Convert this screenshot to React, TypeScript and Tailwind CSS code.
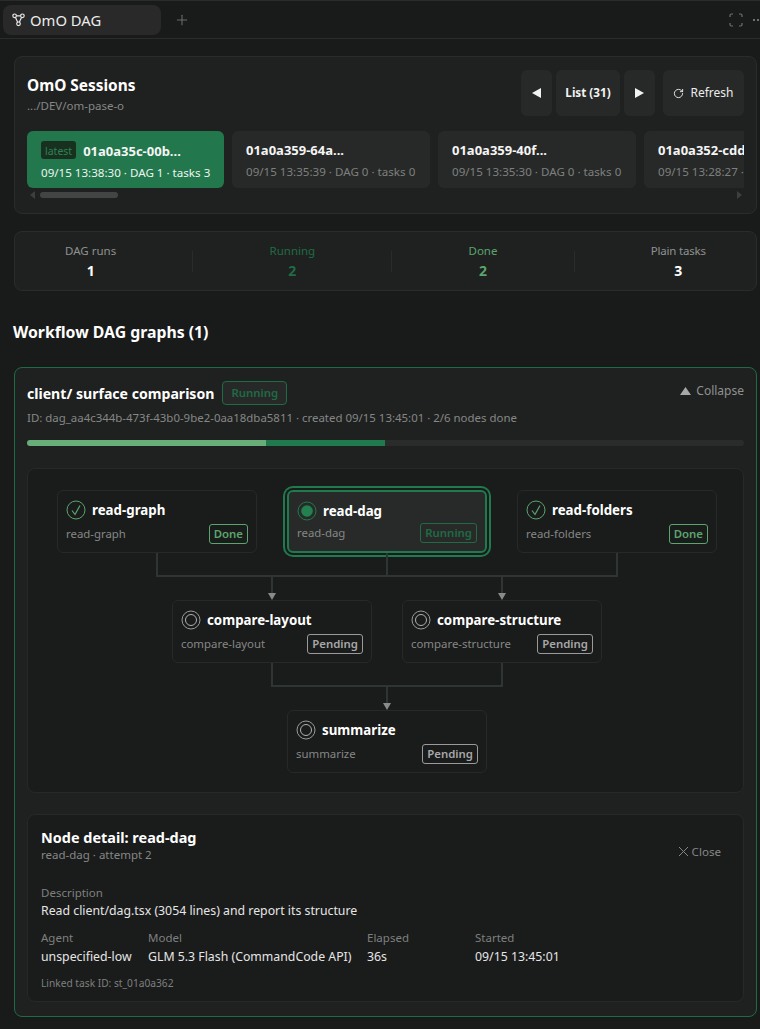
import { Fragment } from "react";
import { Plus, RotateCw } from "lucide-react";

type NodeStatus = "done" | "running" | "pending";

const font = "font-['Noto_Sans',sans-serif]";

const sessions = [
  { id: "01a0a35c-00b...", meta: "09/15 13:38:30 · DAG 1 · tasks 3", latest: true, width: "w-[197px]" },
  { id: "01a0a359-64a...", meta: "09/15 13:35:39 · DAG 0 · tasks 0", width: "w-[198px]" },
  { id: "01a0a359-40f...", meta: "09/15 13:35:30 · DAG 0 · tasks 0", width: "w-[198px]" },
  { id: "01a0a352-cdd...", meta: "09/15 13:28:27 · DAG 0 · tasks 0", width: "w-[198px]" },
];

const stats = [
  { label: "DAG runs", value: "1", labelColor: "text-[#8f9190]", valueColor: "text-white" },
  { label: "Running", value: "2", labelColor: "text-[#1f6b45]", valueColor: "text-[#1f6b45]" },
  { label: "Done", value: "2", labelColor: "text-[#5aa56d]", valueColor: "text-[#5aa56d]" },
  { label: "Plain tasks", value: "3", labelColor: "text-[#8f9190] tracking-[-0.2px]", valueColor: "text-white" },
];

function StatusIcon({ status }: { status: NodeStatus }) {
  if (status === "done") {
    return (
      <svg width="20" height="20" viewBox="0 0 20 20" fill="none" className="shrink-0">
        <circle cx="10" cy="10" r="9" stroke="#5aa56d" strokeWidth="1" />
        <path d="M6 10.5 L9 14.5 L14 5.5" stroke="#5aa56d" strokeWidth="1.2" />
      </svg>
    );
  }
  if (status === "running") {
    return (
      <svg width="20" height="20" viewBox="0 0 20 20" fill="none" className="shrink-0">
        <circle cx="10" cy="10" r="9" stroke="#1f7a4d" strokeWidth="1" />
        <circle cx="10" cy="10" r="5.8" fill="#23804f" />
      </svg>
    );
  }
  return (
    <svg width="20" height="20" viewBox="0 0 20 20" fill="none" className="shrink-0">
      <circle cx="10" cy="10" r="9" stroke="#9a9a9a" strokeWidth="1" />
      <circle cx="10" cy="10" r="5.5" stroke="#b0b0b0" strokeWidth="1" />
    </svg>
  );
}

function Badge({ status }: { status: NodeStatus }) {
  const styles = {
    done: "border-[#5aa56d] text-[#5aa56d]",
    running: "border-[#1f6b45] text-[#1f6b45]",
    pending: "border-[#9a9a9a] text-[#a8a8a8]",
  };
  const labels = { done: "Done", running: "Running", pending: "Pending" };
  return (
    <span className={`h-5 px-1 flex items-center rounded-[3px] border text-[11.4px] font-semibold ${styles[status]}`}>
      {labels[status]}
    </span>
  );
}

function DagNode({ name, status }: { name: string; status: NodeStatus }) {
  const running = status === "running";
  return (
    <div
      className={`w-[200px] h-[63px] rounded-md px-2 flex flex-col ${
        running
          ? "border-2 border-[#1f7a4d] bg-[#282a29] pt-[9px] shadow-[0_0_0_2px_#1a1b1b,0_0_0_4px_#1f7a4d]"
          : "border border-[#272928] bg-[#1a1b1b] pt-[9px]"
      }`}
    >
      <div className="flex items-center gap-[6px] h-5">
        <StatusIcon status={status} />
        <span className="text-[13.3px] font-bold text-white leading-5">{name}</span>
      </div>
      <div className={`flex items-center justify-between ${running ? "mt-[2px]" : "mt-1"}`}>
        <span className="text-[11.4px] text-[#858786]">{name}</span>
        <Badge status={status} />
      </div>
    </div>
  );
}

function Arrow({ x, y }: { x: number; y: number }) {
  return <polygon points={`${x - 4},${y} ${x + 4},${y} ${x},${y + 7}`} fill="#8a8a8a" />;
}

function Triangle({ dir }: { dir: "left" | "right" }) {
  return (
    <svg width="9" height="10" viewBox="0 0 9 10">
      <polygon points={dir === "left" ? "9,0 9,10 0,5" : "0,0 0,10 9,5"} fill="#f2f2f2" />
    </svg>
  );
}

function Field({ label, value }: { label: string; value: string }) {
  return (
    <div>
      <div className="text-[11.5px] text-[#7e807f] leading-[18px]">{label}</div>
      <div className="text-[12.3px] text-[#e6e6e6] leading-[19px] whitespace-nowrap">{value}</div>
    </div>
  );
}

export default function App() {
  return (
    <div className={`${font} w-[760px] h-[1029px] overflow-hidden bg-[#191a1a] text-white`}>
      {/* tab bar */}
      <div className="h-[39px] border-y border-[#2a2c2b] flex items-center pl-[3px]">
        <div className="w-[158px] h-[30px] rounded-lg bg-[#282928] flex items-center pl-[9px] gap-[5px]">
          <svg width="13" height="14" viewBox="0 0 13 14" fill="none" stroke="#e8e8e8" strokeWidth="1.2">
            <circle cx="2.6" cy="2.8" r="1.8" />
            <circle cx="10.4" cy="2.8" r="1.8" />
            <circle cx="6.5" cy="10.8" r="1.8" />
            <path d="M3.5 4.5 L5.7 9.2 M9.5 4.5 L7.3 9.2 M4.4 2.8 H8.6" />
          </svg>
          <span className="text-[14.8px] text-[#ececec] pt-px">OmO DAG</span>
        </div>
        <Plus size={16} strokeWidth={1.6} className="ml-[13px] text-[#6b6d6c]" />
        <svg width="14" height="14" viewBox="0 0 14 14" fill="none" stroke="#6f7170" strokeWidth="1.2" className="ml-auto">
          <path d="M1 4 V2.5 Q1 1 2.5 1 H4 M10 1 H11.5 Q13 1 13 2.5 V4 M13 10 V11.5 Q13 13 11.5 13 H10 M4 13 H2.5 Q1 13 1 11.5 V10" />
        </svg>
        <div className="flex gap-[2px] ml-[10px] w-[7px] overflow-hidden shrink-0">
          <span className="w-[2px] h-[2px] bg-[#6f7170] shrink-0" />
          <span className="w-[2px] h-[2px] bg-[#6f7170] shrink-0" />
          <span className="w-[2px] h-[2px] bg-[#6f7170] shrink-0" />
        </div>
      </div>

      <div className="pl-[14px] pr-[3px] pt-[17px]">
        {/* sessions */}
        <div className="h-[158px] rounded-lg border border-[#2a2c2b] bg-[#1f2120] px-3 pt-[13px]">
          <div className="flex items-start justify-between h-[46px]">
            <div className="pt-[4px]">
              <div className="text-[15.4px] font-bold leading-6">OmO Sessions</div>
              <div className="text-[11.5px] text-[#858786] leading-4">.../DEV/om-pase-o</div>
            </div>
            <div className="flex">
              <button className="w-[31px] h-[46px] rounded-md bg-[#272928] flex items-center justify-center">
                <Triangle dir="left" />
              </button>
              <button className="w-[64px] h-[46px] ml-1 rounded-md bg-[#272928] text-[11.7px] font-bold text-[#f2f2f2]">List (31)</button>
              <button className="w-[31px] h-[46px] ml-1 rounded-md bg-[#272928] flex items-center justify-center">
                <Triangle dir="right" />
              </button>
              <button className="w-[81px] h-[46px] ml-2 rounded-md bg-[#272928] flex items-center justify-center gap-[6px] text-xs text-[#ececec]">
                <RotateCw size={11} />
                Refresh
              </button>
            </div>
          </div>
          <div className="flex gap-2 mt-[15px] overflow-hidden">
            {sessions.map((s) => (
              <div
                key={s.id}
                className={`${s.width} h-[57px] shrink-0 rounded-md pl-[14px] whitespace-nowrap ${
                  s.latest ? "bg-[#22774d] pt-[9px]" : "bg-[#272928] pt-[8px]"
                }`}
              >
                <div className="flex items-center gap-[7px] h-6">
                  {s.latest && (
                    <span className="h-[18px] mb-[4px] px-[4px] rounded-[3px] bg-[#18301f] text-[#2f8355] text-[10.5px] leading-[20px]">latest</span>
                  )}
                  <span className="text-[13px] font-bold text-[#f5f5f5]">{s.id}</span>
                </div>
                <div className={`text-[11.6px] leading-[18px] ${s.latest ? "text-[#eef5f0]" : "text-[#7e807f]"}`}>{s.meta}</div>
              </div>
            ))}
          </div>
          <div className="flex items-center h-[6px] mt-[4px]">
            <span className="ml-[3px] w-0 h-0 border-y-[4px] border-y-transparent border-r-[5px] border-r-[#3d3f3e]" />
            <span className="ml-[5px] w-[78px] h-[6px] rounded-full bg-[#434544]" />
            <span className="ml-auto mr-[2px] w-0 h-0 border-y-[4px] border-y-transparent border-l-[5px] border-l-[#3d3f3e]" />
          </div>
        </div>

        {/* stats */}
        <div className="mt-[17px] h-[60px] rounded-lg border border-[#2a2c2b] bg-[#1f2120] px-3 flex items-center justify-around">
          {stats.map((s, i) => (
            <Fragment key={s.label}>
              {i > 0 && <span className="w-px h-[21px] bg-[#2a2c2b]" />}
              <div className="text-center">
                <div className={`text-[11.5px] leading-[18px] ${s.labelColor}`}>{s.label}</div>
                <div className={`text-sm font-bold leading-[21px] ${s.valueColor}`}>{s.value}</div>
              </div>
            </Fragment>
          ))}
        </div>

        <h2 className="mt-[29px] -ml-px text-[15.8px] font-bold leading-6">Workflow DAG graphs (1)</h2>

        {/* main card */}
        <div className="mt-[23px] h-[650px] rounded-lg border border-[#1f6b45] bg-[#1f2120] px-3 pt-[13px]">
          <div className="flex items-start justify-between h-6">
            <div className="flex items-center gap-2 h-6">
              <span className="text-[14.1px] font-bold h-6 leading-[26px]">client/ surface comparison</span>
              <span className="h-6 px-[8px] flex items-center rounded-[4px] border border-[#1f6b45] bg-[#272928] text-[11.4px] font-semibold text-[#1f6b45]">Running</span>
            </div>
            <div className="flex items-center gap-[5px] text-xs text-[#8f9190] leading-[18px] pt-px">
              <svg width="11" height="8" viewBox="0 0 11 8">
                <polygon points="5.5,0 11,8 0,8" fill="#a8a8a8" />
              </svg>
              Collapse
            </div>
          </div>
          <div className="mt-[4px] text-[11.45px] text-[#858786] leading-[18px] whitespace-nowrap">
            ID: dag_aa4c344b-473f-43b0-9be2-0aa18dba5811 · created 09/15 13:45:01 · 2/6 nodes done
          </div>

          <div className="mt-[13px] h-[6px] rounded-full bg-[#2a2c2b] flex overflow-hidden">
            <div className="w-[239px] bg-[#69ae78]" />
            <div className="w-[119px] bg-[#1f7a4d]" />
          </div>

          {/* graph */}
          <div className="mt-[22px] h-[325px] rounded-lg border border-[#272928] bg-[#1a1b1b] pt-[21px] flex flex-col items-center pl-[3px]">
            <div className="flex gap-[30px]">
              <DagNode name="read-graph" status="done" />
              <DagNode name="read-dag" status="running" />
              <DagNode name="read-folders" status="done" />
            </div>
            <svg width="660" height="47" viewBox="0 0 660 47" fill="none" className="shrink-0">
              <path d="M100 0 V23 H560 V0 M330 0 V23 M215 23 V40 M445 23 V40" stroke="#2f3533" strokeWidth="2" />
              <Arrow x={215} y={40} />
              <Arrow x={445} y={40} />
            </svg>
            <div className="flex gap-[30px]">
              <DagNode name="compare-layout" status="pending" />
              <DagNode name="compare-structure" status="pending" />
            </div>
            <svg width="232" height="47" viewBox="0 0 232 47" fill="none" className="shrink-0">
              <path d="M1 0 V23 H231 V0 M116 23 V40" stroke="#2f3533" strokeWidth="2" />
              <Arrow x={116} y={40} />
            </svg>
            <DagNode name="summarize" status="pending" />
          </div>

          {/* node detail */}
          <div className="mt-[21px] h-[188px] rounded-lg border border-[#272928] bg-[#1a1b1b] px-[13px] pt-[13px]">
            <div className="flex items-start justify-between">
              <div>
                <div className="text-[14.45px] font-bold leading-[19px]">Node detail: read-dag</div>
                <div className="text-[11.5px] text-[#858786] leading-4">read-dag · attempt 2</div>
              </div>
              <div className="flex items-center gap-[3px] mt-[15px] mr-[9px] text-[11.6px] text-[#858786]">
                <svg width="11" height="11" viewBox="0 0 11 11" fill="none" stroke="#858786" strokeWidth="1">
                  <path d="M1 1 L10 10 M10 1 L1 10" />
                </svg>
                Close
              </div>
            </div>
            <div className="mt-[20px]">
              <div className="text-[11.5px] text-[#7e807f] leading-[19px]">Description</div>
              <div className="text-[12.3px] text-[#e6e6e6] leading-[18px]">Read client/dag.tsx (3054 lines) and report its structure</div>
            </div>
            <div className="mt-[9px] grid grid-cols-[107px_219px_108px_auto]">
              <Field label="Agent" value="unspecified-low" />
              <Field label="Model" value="GLM 5.3 Flash (CommandCode API)" />
              <Field label="Elapsed" value="36s" />
              <Field label="Started" value="09/15 13:45:01" />
            </div>
            <div className="mt-[9px] text-[10.2px] text-[#7e807f] leading-4">Linked task ID: st_01a0a362</div>
          </div>
        </div>
      </div>
    </div>
  );
}
